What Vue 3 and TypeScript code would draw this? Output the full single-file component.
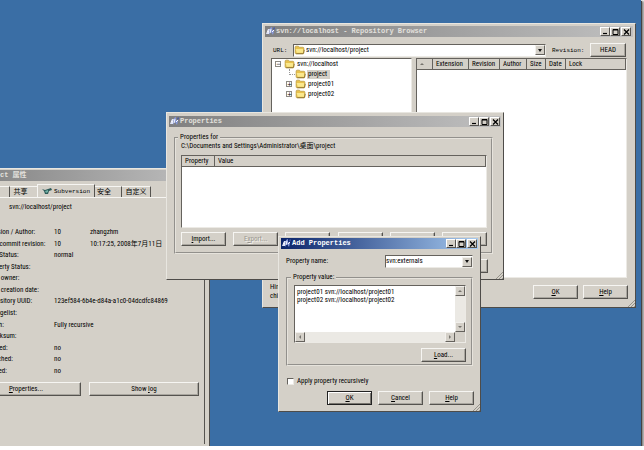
<script setup lang="ts">
import { ref } from 'vue'

interface InfoRow {
  label: string
  value?: string
  extra?: string
}

const infoRows: InfoRow[] = [
  { label: 'Revision / Author:', value: '10', extra: 'zhangzhm' },
  { label: 'Last commit revision:', value: '10', extra: '10:17:25, 2008年7月11日' },
  { label: 'Text Status:', value: 'normal' },
  { label: 'Property Status:' },
  { label: 'Lock owner:' },
  { label: 'Lock creation date:' },
  { label: 'Repository UUID:', value: '123ef584-6b4e-d84a-a1c0-04dcdfc84869' },
  { label: 'Changelist:' },
  { label: 'Depth:', value: 'Fully recursive' },
  { label: 'Checksum:' },
  { label: 'Locked:', value: 'no' },
  { label: 'Switched:', value: 'no' },
  { label: 'Copied:', value: 'no' },
]

const repoColumns = ['Extension', 'Revision', 'Author', 'Size', 'Date', 'Lock']
const captionButtons = ['Minimize', 'Maximize', 'Close']

const url = ref('svn://localhost/project')
const propertyName = ref('svn:externals')
const propertyValue = ref('project01 svn://localhost/project01\nproject02 svn://localhost/project02')
const recursive = ref(false)
</script>

<template>
  <main class="desktop">
    <svg class="defs" width="0" height="0" aria-hidden="true">
      <symbol id="logo" viewBox="0 0 10 9">
        <path d="M0 7 L2 2 L4 2 L3 7 Z" fill="#dfe4f8" />
        <path d="M3 8 L4 1 L6 0 L6 3 L8 4 L7 8 L5 5 Z" fill="#8798d8" />
        <path d="M1 4 L3 5 M5 2 L4 6 M6 5 L8 3" stroke="#f8f9ff" stroke-width="1" fill="none" />
        <path d="M7 2 L8 0 L9 1 L8 3 Z" fill="#4156a8" />
      </symbol>
      <symbol id="folder" viewBox="0 0 10 9">
        <path d="M1 2 Q1 1 2 1 H4 L5 2 H8 Q9 2 9 3 V7 Q9 8 8 8 H2 Q1 8 1 7 Z" fill="#e8c24c" stroke="#b3923c" stroke-width=".6" />
        <path d="M1.5 3.5 H8 L8.6 7 H2.5 Z" fill="#fbe88c" />
        <path d="M2 7.8 H8.4 L9.4 4.4" stroke="#8e7430" stroke-width=".8" fill="none" />
      </symbol>
      <symbol id="Minimize" viewBox="0 0 9 8"><path d="M2 5.5 H6" stroke="#000" stroke-width="1.2" /></symbol>
      <symbol id="Maximize" viewBox="0 0 9 8"><path d="M2 1.5 H7 V6.5 H2 Z M2 2 H7" stroke="#000" fill="none" stroke-width="1" /></symbol>
      <symbol id="Close" viewBox="0 0 9 8"><path d="M2 1.5 L7 6.5 M7 1.5 L2 6.5" stroke="#000" stroke-width="1.3" /></symbol>
      <symbol id="grip" viewBox="0 0 8 8">
        <path d="M1 8 L8 1 M4 8 L8 4 M7 8 L8 7" stroke="#96938b" stroke-width="1" />
      </symbol>
    </svg>

    <section class="window info-window">
      <header class="title inactive"><h1>project 属性</h1></header>
      <nav class="tabs">
        <button class="tab first">常规</button>
        <button class="tab share">共享</button>
        <button class="tab selected">
          <svg width="10" height="7" viewBox="0 0 10 7">
            <path d="M0 1 L3 2 L6 1 L9 0 L10 2 L7 3 L6 6 L3 6 L2 3 Z" fill="#2c5a58" />
            <path d="M3 3 L6 2 L6 4 L4 5 Z" fill="#6fb0a4" />
          </svg>
          Subversion
        </button>
        <button class="tab safe">安全</button>
        <button class="tab custom">自定义</button>
      </nav>
      <div class="tab-page">
        <p class="info-url">svn://localhost/project</p>
        <dl class="info">
          <div v-for="row in infoRows" :key="row.label" class="info-row">
            <dt>{{ row.label }}</dt>
            <dd>{{ row.value }}</dd>
            <dd v-if="row.extra">{{ row.extra }}</dd>
          </div>
        </dl>
        <div class="info-actions">
          <button class="btn"><u>P</u>roperties...</button>
          <button class="btn">Show <u>l</u>og</button>
        </div>
      </div>
    </section>

    <section class="window repo-window">
      <header class="title inactive">
        <svg class="logo"><use href="#logo" /></svg>
        <h1>svn://localhost - Repository Browser</h1>
        <button v-for="name in captionButtons" :key="name" class="cap" :class="name" :aria-label="name">
          <svg width="9" height="8"><use :href="'#' + name" /></svg>
        </button>
      </header>
      <div class="repo-bar">
        <label class="mono" for="url">URL:</label>
        <div class="combo">
          <svg class="folder"><use href="#folder" /></svg>
          <select id="url" v-model="url"><option>svn://localhost/project</option></select>
          <span class="arrow"><i class="down"></i></span>
        </div>
        <span class="mono rev">Revision:</span>
        <button class="btn head">HEAD</button>
      </div>
      <div class="repo-panes">
        <ul class="tree sunken">
          <li><i class="box">−</i><svg class="folder"><use href="#folder" /></svg><span>svn://localhost</span></li>
          <li class="child"><i class="dots"></i><svg class="folder"><use href="#folder" /></svg><span class="picked">project</span></li>
          <li class="child"><i class="box">+</i><svg class="folder"><use href="#folder" /></svg><span>project01</span></li>
          <li class="child"><i class="box">+</i><svg class="folder"><use href="#folder" /></svg><span>project02</span></li>
        </ul>
        <div class="list sunken">
          <table>
            <thead>
              <tr>
                <th class="sort" aria-label="Name"><i class="up"></i></th>
                <th v-for="c in repoColumns" :key="c" :class="c">{{ c }}</th>
              </tr>
            </thead>
          </table>
        </div>
      </div>
      <footer class="repo-foot">
        <p>Hint:<br />child</p>
        <button class="btn"><u>O</u>K</button>
        <button class="btn"><u>H</u>elp</button>
      </footer>
      <svg class="grip"><use href="#grip" /></svg>
    </section>

    <section class="window props-window">
      <header class="title inactive">
        <svg class="logo"><use href="#logo" /></svg>
        <h1>Properties</h1>
        <button v-for="name in captionButtons" :key="name" class="cap" :class="name" :aria-label="name">
          <svg width="9" height="8"><use :href="'#' + name" /></svg>
        </button>
      </header>
      <fieldset class="props-group">
        <legend>Properties for</legend>
        <p class="path">C:\Documents and Settings\Administrator\桌面\project</p>
        <div class="list sunken">
          <table>
            <thead>
              <tr><th class="prop">Property</th><th>Value</th></tr>
            </thead>
          </table>
        </div>
        <div class="props-actions">
          <button class="btn"><u>I</u>mport...</button>
          <button class="btn" disabled>E<u>x</u>port...</button>
          <button class="btn" aria-label="Save"></button>
          <button class="btn" aria-label="Remove"></button>
          <button class="btn" aria-label="Edit"></button>
          <button class="btn" aria-label="Add"></button>
        </div>
      </fieldset>
      <footer class="props-foot"><button class="btn" aria-label="Help"></button></footer>
      <svg class="grip"><use href="#grip" /></svg>
    </section>

    <section class="window add-window">
      <header class="title active">
        <svg class="logo"><use href="#logo" /></svg>
        <h1>Add Properties</h1>
        <button v-for="name in captionButtons" :key="name" class="cap" :class="name" :aria-label="name">
          <svg width="9" height="8"><use :href="'#' + name" /></svg>
        </button>
      </header>
      <div class="name-row">
        <label for="pname">Property name:</label>
        <div class="combo">
          <select id="pname" v-model="propertyName"><option>svn:externals</option></select>
          <span class="arrow"><i class="down"></i></span>
        </div>
      </div>
      <fieldset class="value-group">
        <legend>Property value:</legend>
        <div class="editor sunken">
          <textarea v-model="propertyValue" aria-label="Property value" wrap="off" spellcheck="false"></textarea>
          <div class="vbar">
            <button aria-label="Scroll up"><i class="up"></i></button>
            <button aria-label="Scroll down"><i class="down"></i></button>
          </div>
          <div class="hbar">
            <button aria-label="Scroll left"><i class="left"></i></button>
            <button aria-label="Scroll right"><i class="right"></i></button>
          </div>
        </div>
        <button class="btn load"><u>L</u>oad...</button>
      </fieldset>
      <label class="check"><input v-model="recursive" type="checkbox" />Apply property recursively</label>
      <footer class="add-foot">
        <button class="btn default"><u>O</u>K</button>
        <button class="btn"><u>C</u>ancel</button>
        <button class="btn"><u>H</u>elp</button>
      </footer>
      <svg class="grip"><use href="#grip" /></svg>
    </section>
  </main>
</template>

<style>
body {
  background: #fff;
}
</style>

<style scoped>
.desktop {
  position: relative;
  height: calc(100vh - 4px);
  margin-right: 3px;
  background: #3a6ea5;
  box-shadow: 1px 1px 0 #444, 2px 2px 2px 1px #888;
  font: 7px/9px "Roboto Condensed", Lato, "Noto Sans CJK SC", sans-serif;
  color: #000;
}
.desktop * {
  box-sizing: border-box;
}
.defs {
  position: absolute;
}
h1, p, ul, dl, dd, dt, fieldset {
  margin: 0;
  padding: 0;
}
button, select, textarea, input {
  font: inherit;
  color: inherit;
  margin: 0;
  padding: 0;
  border-radius: 0;
}
.window {
  position: absolute;
  display: flex;
  flex-direction: column;
  background: #d4d0c8;
  padding: 3px 2px 2px;
  border: 1px solid;
  border-color: #e8e6e0 #4e4c49 #4e4c49 #e8e6e0;
}
.title {
  display: flex;
  align-items: center;
  height: 11px;
  padding: 0 2px 0 1px;
  color: #e2e0dc;
}
.window > .title {
  flex: none;
}
.inactive {
  background: linear-gradient(90deg, #808080, #c0c0c0);
}
.active {
  background: linear-gradient(90deg, #0a246a, #a6caf0);
  color: #fff;
}
.title h1 {
  flex: 1;
  font: bold 7px/9px "Liberation Mono", "Noto Sans CJK SC", monospace;
  white-space: nowrap;
}
.logo {
  width: 10px;
  height: 9px;
}
.cap {
  display: flex;
  width: 10px;
  height: 9px;
  background: #d4d0c8;
  border: 1px solid;
  border-color: #fff #55534f #55534f #fff;
  align-items: center;
  justify-content: center;
}
.cap svg {
  flex: none;
}
.Close {
  margin-left: 1px;
}
.btn {
  width: 45px;
  height: 14px;
  background: #d4d0c8;
  border: 1px solid;
  border-color: #f6f5f2 #55534f #55534f #f6f5f2;
  box-shadow: inset -1px -1px #a9a69f;
  text-align: center;
  line-height: 10px;
}
.btn:disabled {
  color: #9a978f;
  text-shadow: 1px 1px #f4f2ee;
}
.default {
  border-color: #222;
  box-shadow: inset 1px 1px #fff, inset -1px -1px #77746e;
}
.sunken {
  background: #fff;
  border: 1px solid;
  border-color: #65625d #eceae5 #eceae5 #65625d;
}
.mono {
  font: 6px/9px "Liberation Mono", monospace;
}
.combo {
  display: flex;
  align-items: center;
  height: 13px;
  background: #fff;
  border: 1px solid;
  border-color: #65625d #eceae5 #eceae5 #65625d;
}
.combo select {
  flex: 1;
  min-width: 0;
  appearance: none;
  border: 0;
  background: transparent;
}
.combo .folder {
  margin-right: 1px;
}
.arrow, .vbar button, .hbar button {
  display: flex;
  align-items: center;
  justify-content: center;
  width: 10px;
  height: 10px;
  background: #d4d0c8;
  border: 1px solid;
  border-color: #f2f0ec #65625d #65625d #f2f0ec;
}
.down, .up, .left, .right {
  border: 2px solid transparent;
}
.down {
  border-top: 3px solid #111;
  border-bottom: 0;
}
.up {
  border-bottom: 2px solid #77746e;
  border-top: 0;
}
.left {
  border-right: 2px solid #77746e;
  border-left: 0;
}
.right {
  border-left: 2px solid #77746e;
  border-right: 0;
}
.vbar .down {
  border-top: 2px solid #77746e;
}
.folder {
  flex: none;
  width: 11px;
  height: 10px;
}
.grip {
  position: absolute;
  right: 0;
  bottom: 0;
  width: 8px;
  height: 8px;
}
table {
  width: 100%;
  table-layout: fixed;
  border-collapse: separate;
  border-spacing: 0;
}
th {
  height: 11px;
  padding: 0 0 0 3px;
  background: #d4d0c8;
  border-right: 1px solid #65625d;
  border-bottom: 1px solid #65625d;
  font-weight: normal;
  text-align: left;
  line-height: 9px;
}

/* Shell property sheet */
.info-window {
  left: -40px;
  top: 168px;
  bottom: 0;
  width: 250px;
  padding-top: 1px;
  border-bottom: 0;
}
.info-window .title {
  padding-left: 16px;
}
.tabs {
  display: flex;
  align-items: flex-end;
  height: 16px;
}
.tab {
  height: 11px;
  background: none;
  border: 0;
  border-right: 1px solid #55534f;
  border-top: 1px solid #f6f5f2;
  white-space: nowrap;
}
.first {
  width: 47px;
}
.share {
  width: 27px;
  padding-right: 6px;
  border-right: 0;
}
.selected {
  display: flex;
  align-items: center;
  gap: 2px;
  width: 58px;
  height: 13px;
  padding-left: 4px;
  border-left: 1px solid #f6f5f2;
  font: 6px/9px "Liberation Mono", monospace;
}
.safe {
  width: 27px;
  padding-right: 8px;
}
.custom {
  width: 29px;
}
.tab-page {
  flex: 1;
  margin-right: 2px;
  padding: 5px 5px 0 8px;
  border-top: 1px solid #f6f5f2;
  border-right: 1px solid #55534f;
}
.info-url {
  padding-left: 38px;
}
.info {
  display: grid;
  grid-auto-rows: 1fr;
  height: 150px;
  margin-top: 15px;
  padding-left: 15px;
}
.info-row {
  display: grid;
  grid-template-columns: 68px 36px 1fr;
  align-items: center;
  white-space: nowrap;
}
.info-actions {
  display: flex;
  gap: 8px;
  margin-top: 5px;
}
.info-actions .btn {
  flex: 1;
}

/* Repository browser */
.repo-window {
  left: 262px;
  top: 23px;
  width: 374px;
  height: 285px;
  padding-top: 2px;
}
.repo-bar {
  display: flex;
  align-items: center;
  padding: 6px 7px 0 8px;
}
.repo-bar label {
  width: 20px;
}
.repo-bar .combo {
  flex: 1;
}
.rev {
  width: 44px;
  padding-left: 6px;
}
.head {
  width: 36px;
}
.repo-panes {
  flex: 1;
  display: grid;
  grid-template-columns: 141px 1fr;
  gap: 4px;
  padding: 1px 6px 0;
}
.tree {
  padding: 0 2px;
  list-style: none;
}
.tree li {
  display: flex;
  align-items: center;
  height: 10px;
}
.tree span {
  padding: 0 1px;
  margin-left: 1px;
}
.tree .child {
  padding-left: 11px;
}
.tree .picked {
  background: #d4d0c8;
  padding-right: 3px;
}
.box {
  width: 6px;
  height: 6px;
  margin: 0 3px 0 1px;
  border: 1px solid #8d8a84;
  font: 6px/4px "DejaVu Sans", sans-serif;
  text-align: center;
}
.dots {
  width: 6px;
  height: 6px;
  margin: 0 0 5px 4px;
  border-left: 1px dotted #999;
  border-bottom: 1px dotted #999;
}
.sort { width: 16px; }
.sort i { display: inline-block; vertical-align: middle; }
.Extension { width: 36px; }
.Revision { width: 31px; }
.Author { width: 27px; }
.Size { width: 19px; }
.Date { width: 20px; }
.repo-foot {
  display: flex;
  align-items: center;
  gap: 5px;
  padding: 5px 5px 4px;
}
.repo-foot p {
  flex: 1;
}

/* Properties dialog */
.props-window {
  left: 166px;
  top: 112px;
  width: 338px;
  height: 168px;
}
.props-window .title, .add-window .title {
  padding-right: 1px;
}
fieldset {
  min-width: 0;
  border: 2px groove #e6e3dc;
}
legend {
  height: 9px;
  padding: 0 2px;
}
.props-group {
  flex: 1;
  display: flex;
  flex-direction: column;
  margin: 6px 8px 0 5px;
  padding: 0 4px 5px 5px;
}
.props-group legend, .value-group legend {
  margin-left: -3px;
}
.path {
  height: 13px;
}
.props-group .list {
  height: 73px;
}
.prop {
  width: 33px;
}
.props-actions {
  display: grid;
  grid-template-columns: repeat(6, 45px);
  justify-content: space-between;
  padding-top: 4px;
}
.props-foot {
  display: flex;
  justify-content: flex-end;
  padding: 5px 13px 4px;
}

/* Add properties dialog */
.add-window {
  left: 278px;
  top: 236px;
  width: 203px;
  height: 176px;
  padding-top: 1px;
}
.name-row {
  display: flex;
  justify-content: space-between;
  align-items: center;
  padding: 6px 5px 5px;
}
.name-row .combo {
  width: 88px;
}
.value-group {
  display: flex;
  flex-direction: column;
  margin: 0 5px;
  padding: 3px 5px 2px 6px;
}
.editor {
  display: grid;
  grid-template: 46px 10px / 1fr 10px;
}
.editor textarea {
  display: block;
  width: 100%;
  height: 100%;
  padding: 2px;
  border: 0;
  background: transparent;
  resize: none;
  overflow: hidden;
  line-height: 8px;
}
.vbar, .hbar {
  display: flex;
  justify-content: space-between;
  background: #ebe9e4;
}
.vbar {
  flex-direction: column;
}
.editor::after {
  content: "";
  background: #d4d0c8;
}
.load {
  align-self: flex-end;
  margin-top: 5px;
}
.check {
  display: flex;
  align-items: center;
  gap: 3px;
  margin: 11px 5px 5px 6px;
}
.check input {
  appearance: none;
  width: 7px;
  height: 7px;
  background: #fff;
  border: 1px solid;
  border-color: #65625d #eceae5 #eceae5 #65625d;
}
.add-foot {
  display: flex;
  justify-content: flex-end;
  gap: 6px;
  padding-right: 4px;
}
</style>
